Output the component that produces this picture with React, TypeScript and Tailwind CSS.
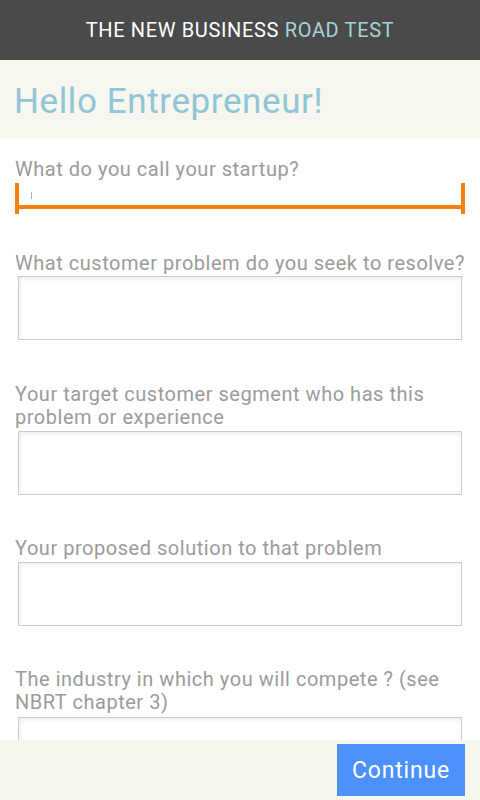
import React from "react";

const font = { fontFamily: "Roboto, 'Noto Sans', sans-serif" };

function Label({ children, className = "" }: { children: React.ReactNode; className?: string }) {
  return (
    <div className={`px-[15px] text-[20px] leading-[23px] tracking-[0.53px] text-[#9b9b9b] ${className}`}>{children}</div>
  );
}

function Box({ className = "" }: { className?: string }) {
  return (
    <div
      className={`mx-[18px] h-[64px] shrink-0 border border-[#cdcdcd] bg-white shadow-[inset_1px_2px_4px_rgba(0,0,0,0.07)] ${className}`}
    />
  );
}

export default function App() {
  return (
    <div className="flex h-[800px] w-[480px] flex-col overflow-hidden bg-white" style={font}>
      <div className="flex h-[60px] shrink-0 items-center justify-center bg-[#4a4a4a] text-[20px] tracking-[0.65px]">
        <span className="text-white">THE NEW BUSINESS&nbsp;</span>
        <span className="text-[#a6d3d6]">ROAD TEST</span>
      </div>
      <div className="flex h-[79px] shrink-0 items-center bg-[#f7f6ef] pl-[14px] pt-[3px]">
        <span className="text-[35px] leading-none tracking-[0.6px] text-[#8ec6d5]">Hello Entrepreneur!</span>
      </div>
      <div className="flex min-h-0 flex-1 flex-col overflow-hidden">
        <Label className="mt-[19px]">What do you call your startup?</Label>
        <div className="mx-[15px] mt-[2px] flex h-[31px] shrink-0 flex-col border-x-4 border-[#f4820e]">
          <div className="flex-1 pl-[12px] pt-[9px]">
            <div className="h-[7px] w-px bg-[#b0b0b0]" />
          </div>
          <div className="h-[4px] bg-[#f4820e]" />
          <div className="h-[5px]" />
        </div>
        <Label className="mt-[38px]">What customer problem do you seek to resolve?</Label>
        <Box className="mt-[1px]" />
        <Label className="mt-[43px]">
          Your target customer segment who has this
          <br />
          problem or experience
        </Label>
        <Box className="mt-[2px]" />
        <Label className="mt-[42px]">Your proposed solution to that problem</Label>
        <Box className="mt-[2px]" />
        <Label className="mt-[42px]">
          The industry in which you will compete ? (see
          <br />
          NBRT chapter 3)
        </Label>
        <Box className="mt-[3px]" />
      </div>
      <div className="flex h-[60px] shrink-0 justify-end bg-[#f6f5ee] pr-[15px] pt-[4px]">
        <button className="flex h-[52px] w-[128px] items-center justify-center bg-[#4d91fd] pt-[2px] text-[23px] tracking-[0.8px] text-white">
          Continue
        </button>
      </div>
    </div>
  );
}
